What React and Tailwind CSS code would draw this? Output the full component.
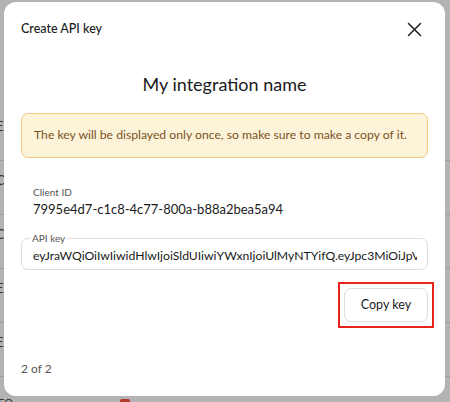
import React from "react";

function XIcon() {
  return (
    <svg width="15" height="15" viewBox="0 0 15 15" fill="none" stroke="#1f1f1f" strokeWidth="1.5" strokeLinecap="round">
      <path d="M1.5 1.5L13.5 13.5M13.5 1.5L1.5 13.5" />
    </svg>
  );
}

export default function App() {
  const font = { fontFamily: "Lato, 'Noto Sans', sans-serif" };
  const rows = ["E", "C", "C", "E", "E"];
  return (
    <div className="relative w-[450px] h-[402px] overflow-hidden bg-[#b3b3b3]" style={font}>
      {/* background page behind overlay */}
      <div className="flex flex-col pt-[107px] text-[13px] text-[#333]">
        {rows.map((r, i) => (
          <div key={i} className="h-[54px] flex items-start pt-[10px] border-b border-[#9c9c9c] -ml-[4px]">
            {r}
          </div>
        ))}
        <div className="flex items-start h-[30px] pt-[18px] -ml-[2px] text-[11px]">
          <span>EO</span>
          <span className="ml-[107px] mt-[4px] w-[10px] h-[6px] bg-[#b33a2c] rounded-t-[2px]"></span>
        </div>
      </div>
      <div className="absolute left-[4px] top-[2px] w-[441px] h-[394px] rounded-[12px] bg-white flex flex-col px-[17px]">
        <div className="flex items-center justify-between h-[52px] pt-[2px]">
          <span className="text-[12.5px] font-medium text-[#1a1a1a]">Create API key</span>
          <span className="mr-[6px] flex"><XIcon /></span>
        </div>
        <div className="text-center text-[18px] text-[#1a1a1a] mt-[16px] leading-[28px]">My integration name</div>
        <div className="mt-[15px] h-[45px] rounded-[7px] border border-[#f3c97e] bg-[#fdf3d9] flex items-center px-[12px] text-[12.2px] text-[#7a521f] whitespace-nowrap">
          The key will be displayed only once, so make sure to make a copy of it.
        </div>
        <div className="mt-[27px] px-[12px] text-[10px] text-[#555] leading-[14px]">Client ID</div>
        <div className="mt-[1px] px-[12px] text-[13px] text-[#1a1a1a] leading-[18px]">7995e4d7-c1c8-4c77-800a-b88a2bea5a94</div>
        <fieldset className="mt-[15px] h-[37px] rounded-[7px] border border-[#dcdcdc] px-[10px] min-w-0">
          <legend className="px-[2px] -ml-[2px] text-[10px] text-[#555] leading-[10px]">API key</legend>
          <div className="text-[12.2px] text-[#1a1a1a] whitespace-nowrap overflow-hidden leading-[18px] mt-[4px] pl-[1px]">
            eyJraWQiOiIwIiwidHlwIjoiSldUIiwiYWxnIjoiUlMyNTYifQ.eyJpc3MiOiJpV
          </div>
        </fieldset>
        <div className="flex justify-end mt-[12px] -mr-[6px]">
          <div className="border-2 border-[#e8231f] p-[4px]">
            <button className="h-[34px] w-[84px] rounded-[7px] border border-[#dcdcdc] bg-white text-[12.5px] text-[#1a1a1a]">
              Copy key
            </button>
          </div>
        </div>
        <div className="mt-[32px] text-[12px] text-[#555]">2 of 2</div>
      </div>
    </div>
  );
}
